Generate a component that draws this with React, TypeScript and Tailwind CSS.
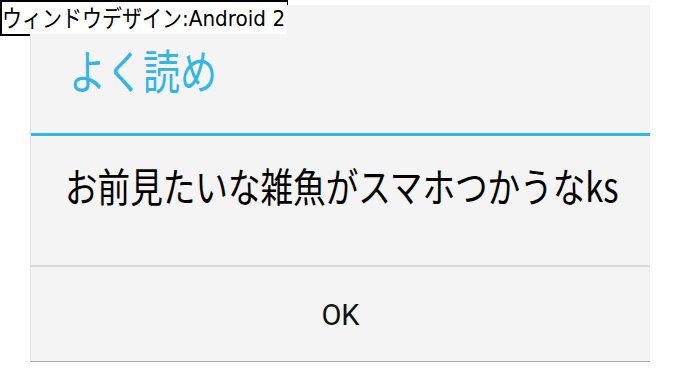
import React from 'react';

const jp = { fontFamily: '"Noto Sans CJK JP", sans-serif' };

const App: React.FC = () => {
  return (
    <div className="relative w-[680px] h-[368px] bg-white overflow-hidden">
      {/* caption frame */}
      <div className="absolute left-0 top-0 w-[288px] h-[36px] border-2 border-black" />
      <div
        className="absolute left-[2px] top-[2px] z-10 w-[285px] h-[32px] bg-white flex items-center text-[20px] leading-none text-black whitespace-nowrap"
        style={{ fontFamily: '"DejaVu Sans", "Noto Sans CJK JP", sans-serif' }}
      >
        <span className="inline-block scale-y-[1.18]" style={jp}>ウィンドウデザイン</span>
        <span className="inline-block scale-y-[1.1]">:Android 2</span>
      </div>

      {/* dialog */}
      <div className="relative ml-[30px] mt-[5px] w-[620px] h-[357px] flex flex-col bg-[#f4f4f4] border-l border-l-[#e2e2e2] border-b border-b-[#a8a8a8]">
        <div className="h-[128px] flex items-center pl-[38px]">
          <span className="inline-block scale-y-[1.25] text-[37px] leading-none text-[#33b5e5]" style={jp}>
            よく読め
          </span>
        </div>
        <div className="h-[3px] bg-[#33b5e5]" />
        <div className="h-[129px] pl-[34px] pt-[33px]">
          <p className="inline-block scale-y-[1.22] text-[32.6px] leading-[32px] text-black whitespace-nowrap" style={jp}>
            お前見たいな雑魚がスマホつかうなks
          </p>
        </div>
        <div className="h-[2px] bg-[#d8d8d8]" />
        <button
          className="h-[94px] w-full flex items-center justify-center pt-[3px] text-[29px] leading-none text-[#111]"
          style={{ fontFamily: 'Roboto, sans-serif' }}
        >
          OK
        </button>
      </div>
    </div>
  );
};

export default App;
